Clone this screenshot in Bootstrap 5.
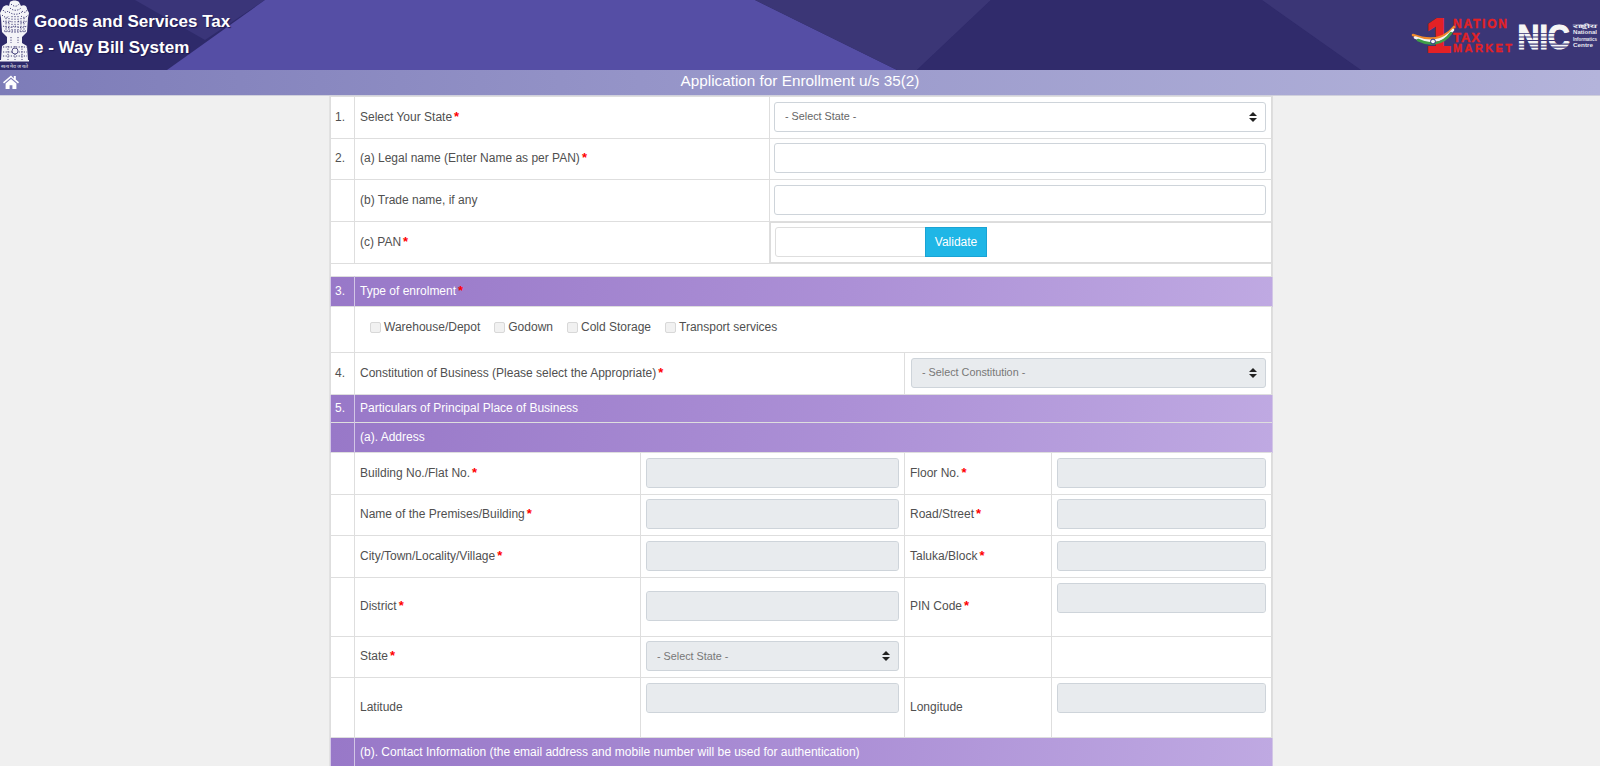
<!DOCTYPE html>
<html lang="en">
<head>
    <meta charset="UTF-8">
    <title>e-Way Bill System - Enrollment</title>
    <link href="https://cdn.jsdelivr.net/npm/bootstrap@5.3.3/dist/css/bootstrap.min.css" rel="stylesheet">
    <style>
        body {
            background: #f0f0f0;
            font-family: "Liberation Sans", Arial, sans-serif;
            font-size: 12px;
            color: #505050;
        }

        /* Top banner */
        .site-head {
            height: 70px;
            background: #2e2a6a;
        }
        .head-art {
            top: 0;
            left: 0;
            width: 100%;
            height: 70px;
        }
        .head-title {
            padding: 9px 0 0 4px;
            color: #fff;
            font-size: 17px;
            font-weight: 700;
            line-height: 26px;
            text-shadow: 1px 1px 1px #1c1850;
        }
        .title-bar {
            height: 26px;
            color: #fff;
            font-size: 15.3px;
            line-height: 22px;
            padding-bottom: 2px;
            background: linear-gradient(90deg, #7d7cb8 0%, #9594c8 40%, #b4b4db 100%);
            border-bottom: 1px solid #d0d0dc;
        }
        .home-link {
            left: 3px;
            top: 5px;
            line-height: 0;
        }

        /* Form sheet */
        .page-wrap {
            padding-left: 2px;
        }
        .form-sheet {
            width: 944px;
            background: #fff;
            border-left: 1px solid #e2e2e2;
            border-right: 2px solid #dcdcdc;
        }
        .enrol-table {
            table-layout: fixed;
            width: 942px;
            --bs-table-border-color: #dedede;
            --bs-table-bg: transparent;
            --bs-table-color: #505050;
            color: #505050;
        }
        .enrol-table td {
            padding: 0 5px 2px;
            vertical-align: middle;
        }
        .enrol-table td:first-child {
            padding-left: 4px;
        }
        .enrol-table td:last-child {
            padding-right: 6px;
        }
        .enrol-table td.wide-cell {
            padding-left: 4px;
        }
        .enrol-table td.narrow-cell {
            padding-left: 6px;
        }
        .enrol-table td.top-cell {
            padding-top: 5px;
            vertical-align: top;
        }
        .rh-13 { height: 13px; }
        .rh-28 { height: 28px; }
        .rh-30 { height: 30px; }
        .rh-41 { height: 41px; }
        .rh-42 { height: 42px; }
        .rh-46 { height: 46px; }
        .rh-59 { height: 59px; }
        .rh-60 { height: 60px; }

        .sec-row {
            background: linear-gradient(100deg, #9878c8 0%, #ac90d6 55%, #bfa9e2 100%);
        }
        .enrol-table .sec-row td {
            color: #fff;
            border-color: #d2c6e6;
        }
        .req {
            color: #f00;
            font-weight: 700;
            font-size: 13px;
            line-height: 0;
            margin-left: 2px;
        }

        /* Inputs */
        .enrol-table .form-control,
        .enrol-table .form-select {
            height: 30px;
            min-height: 30px;
            font-size: 10.8px;
            padding: 0 10px;
            border-color: #ced4da;
            border-radius: 3px;
            color: #666;
        }
        .enrol-table .form-select {
            background-image: url("data:image/svg+xml,%3Csvg xmlns='http://www.w3.org/2000/svg' viewBox='0 0 4 5'%3E%3Cpath fill='%23222' d='M2 0L0 2h4zm0 5L0 3h4z'/%3E%3C/svg%3E");
            background-size: 8px 10px;
            background-position: right 8px center;
        }
        .enrol-table .form-control:disabled,
        .enrol-table .form-select:disabled {
            background-color: #e8ebee;
            color: #777;
        }
        .enrol-table td.pan-cell {
            padding-left: 5px;
            box-shadow: inset 0 0 0 1px #dcdcdc;
        }
        .pan-group {
            width: 213px;
        }
        .enrol-table .pan-group .form-control {
            width: 151px;
            flex: none;
            border-color: #dedede;
            border-radius: 3px 0 0 3px;
        }
        .btn-validate {
            width: 62px;
            height: 30px;
            padding: 0;
            font-size: 12px;
            color: #fff;
            background: #1fb6e6;
            border: 1px solid #1aa3d4;
            border-radius: 0;
        }
        .check-line {
            padding-left: 10px;
            margin-top: -3px;
            column-gap: 14px;
        }
        .check-line label {
            column-gap: 3px;
        }
        .enrol-table .check-line .form-check-input {
            width: 11px;
            height: 11px;
            margin: 0;
            background-color: #f1f1f1;
            border-color: #d8d8d8;
            border-radius: 2px;
            opacity: 1;
        }
    </style>
</head>
<body class="vh-100 overflow-hidden">

<header class="site-head position-relative d-flex">
    <svg class="head-art position-absolute" viewBox="0 0 1600 70" preserveAspectRatio="none">
        <polygon fill="#3a3579" points="135,0 265,0 205,40"/>
        <polygon fill="#554ea5" points="265,0 755,0 897,70 167,70"/>
        <polygon fill="#3b3676" points="755,0 991,0 917,70 897,70"/>
        <polygon fill="#302b6b" points="991,0 1262,0 1361,70 917,70"/>
        <polygon fill="#3b3676" points="1262,0 1600,0 1600,70 1361,70"/>
    </svg>

    <!-- state emblem -->
    <svg class="position-relative flex-shrink-0" width="30" height="70" viewBox="0 0 30 70">
        <path fill="#f4f4f8" d="M10 2C12 0 17 0 19 2L21 6C24 4 27 6 27 9L29 13L28 18L27 32L22 37V43L27 46L28 60H1L2 46L7 43V37L2 32L1 18L0 13L3 7C5 5 8 5 9 6Z"/>
        <g fill="none" stroke="#2e2a6a" stroke-width=".9" stroke-dasharray="1.2 1.4">
            <path d="M11 4C14 7 17 7 19 4M10 8C13 11 18 11 21 8M9 12C13 15 18 15 22 12"/>
            <path d="M3 10C5 13 7 13 8 11M22 11C24 13 26 13 27 10M2 15C5 18 8 18 9 16M21 16C23 18 26 18 28 15"/>
            <path d="M3 21C6 23 9 23 11 21M18 21C21 23 24 23 27 21M3 26C7 28 11 28 14 26M15 26C19 28 23 28 27 26M4 31H26"/>
            <path d="M6 18V33M9 18V33M12 16V34M15 16V34M18 16V34M21 18V33M24 18V33M11 37V43M18 37V43"/>
            <path d="M3 47H27M3 52H27M3 56H27M8 46V60M15 46V60M22 46V60"/>
        </g>
        <circle cx="15" cy="51" r="3" fill="#f4f4f8" stroke="#2e2a6a" stroke-width=".8"/>
        <rect x="0" y="60" width="29" height="1.5" fill="#f4f4f8"/>
        <text x="1" y="67.5" font-size="5" fill="#e8e8f0" font-family="Liberation Sans, sans-serif" textLength="27" lengthAdjust="spacingAndGlyphs">सत्यमेव जयते</text>
    </svg>

    <div class="head-title position-relative">
        <div>Goods and Services Tax</div>
        <div>e - Way Bill System</div>
    </div>

    <!-- 1 Nation Tax Market and NIC logos -->
    <svg class="position-relative ms-auto flex-shrink-0" width="190" height="70" viewBox="0 0 190 70" font-family="Liberation Sans, Arial, sans-serif" font-weight="700">
        <g fill="#e32125" stroke="#e32125" stroke-width=".4">
            <text x="16" y="52" font-size="48" stroke-width="2" textLength="25" lengthAdjust="spacingAndGlyphs">1</text>
            <text x="43" y="28" font-size="12" textLength="54">NATION</text>
            <text x="43" y="41.5" font-size="13" textLength="27">TAX</text>
            <text x="43" y="52" font-size="11" textLength="59">MARKET</text>
        </g>
        <g fill="none" stroke-width="2.6" stroke-linecap="round">
            <path stroke="#f0892a" d="M3 35C16 40 32 42 44 27"/>
            <path stroke="#f4f4f4" d="M5 37.5C16 42 32 44 43 30"/>
            <path stroke="#3f9e48" d="M8 40C18 45 32 46 41 33"/>
        </g>
        <circle cx="23" cy="41.5" r="2.4" fill="#f4f4f4" stroke="#26307a" stroke-width="1"/>

        <text transform="translate(107.5 48.5) scale(.867 1)" font-size="35" fill="#f6f6f6" stroke="#f6f6f6" stroke-width="1.2">NIC</text>
        <g fill="#3b3676">
            <rect x="105" y="33" width="57" height=".8"/>
            <rect x="105" y="36.5" width="57" height="1"/>
            <rect x="105" y="40" width="57" height="1"/>
            <rect x="105" y="43.5" width="57" height="1.2"/>
            <rect x="105" y="46.5" width="57" height="1.2"/>
        </g>
        <g fill="#e8e8f0" font-size="5">
            <text x="163" y="27.5" textLength="24" lengthAdjust="spacingAndGlyphs">राष्ट्रीय</text>
            <text x="163" y="34" textLength="24" lengthAdjust="spacingAndGlyphs">National</text>
            <text x="163" y="40.5" textLength="24" lengthAdjust="spacingAndGlyphs">Informatics</text>
            <text x="163" y="47" textLength="20" lengthAdjust="spacingAndGlyphs">Centre</text>
        </g>
    </svg>
</header>

<div class="title-bar position-relative text-center">
    <a href="#" class="home-link position-absolute">
        <svg width="16" height="14" viewBox="0 0 16 14" fill="#fff">
            <path d="M8 .4 0 7.3l1 1.2L8 2.6l7 5.9 1-1.2-3.2-2.8V1h-2v2.6Z"/>
            <path d="M2.6 8.6V14h4v-3.8h2.8V14h4V8.6L8 4Z"/>
        </svg>
    </a>
    Application for Enrollment u/s 35(2)
</div>

<div class="page-wrap">
    <main class="form-sheet mx-auto">
        <table class="table table-bordered enrol-table mb-0">
            <colgroup>
                <col style="width:24px">
                <col style="width:286px">
                <col style="width:129px">
                <col style="width:135px">
                <col style="width:147px">
                <col style="width:221px">
            </colgroup>
            <tbody>
                <tr class="rh-42">
                    <td>1.</td>
                    <td colspan="2">Select Your State<span class="req">*</span></td>
                    <td colspan="3" class="wide-cell">
                        <select class="form-select"><option>- Select State -</option></select>
                    </td>
                </tr>
                <tr class="rh-41">
                    <td>2.</td>
                    <td colspan="2">(a) Legal name (Enter Name as per PAN)<span class="req">*</span></td>
                    <td colspan="3" class="wide-cell"><input type="text" class="form-control"></td>
                </tr>
                <tr class="rh-42">
                    <td></td>
                    <td colspan="2">(b) Trade name, if any</td>
                    <td colspan="3" class="wide-cell"><input type="text" class="form-control"></td>
                </tr>
                <tr class="rh-42">
                    <td></td>
                    <td colspan="2">(c) PAN<span class="req">*</span></td>
                    <td colspan="3" class="pan-cell">
                        <div class="input-group flex-nowrap pan-group">
                            <input type="text" class="form-control">
                            <button type="button" class="btn btn-validate">Validate</button>
                        </div>
                    </td>
                </tr>
                <tr class="rh-13"><td colspan="6"></td></tr>

                <tr class="rh-30 sec-row">
                    <td>3.</td>
                    <td colspan="5">Type of enrolment<span class="req">*</span></td>
                </tr>
                <tr class="rh-46">
                    <td></td>
                    <td colspan="5">
                        <div class="check-line d-flex">
                            <label class="d-flex align-items-center"><input type="checkbox" class="form-check-input" disabled>Warehouse/Depot</label>
                            <label class="d-flex align-items-center"><input type="checkbox" class="form-check-input" disabled>Godown</label>
                            <label class="d-flex align-items-center"><input type="checkbox" class="form-check-input" disabled>Cold Storage</label>
                            <label class="d-flex align-items-center"><input type="checkbox" class="form-check-input" disabled>Transport services</label>
                        </div>
                    </td>
                </tr>
                <tr class="rh-42">
                    <td>4.</td>
                    <td colspan="3">Constitution of Business (Please select the Appropriate)<span class="req">*</span></td>
                    <td colspan="2" class="narrow-cell">
                        <select class="form-select" disabled><option>- Select Constitution -</option></select>
                    </td>
                </tr>

                <tr class="rh-28 sec-row">
                    <td>5.</td>
                    <td colspan="5">Particulars of Principal Place of Business</td>
                </tr>
                <tr class="rh-30 sec-row">
                    <td></td>
                    <td colspan="5">(a). Address</td>
                </tr>
                <tr class="rh-42">
                    <td></td>
                    <td>Building No./Flat No.<span class="req">*</span></td>
                    <td colspan="2"><input type="text" class="form-control" disabled></td>
                    <td>Floor No.<span class="req">*</span></td>
                    <td><input type="text" class="form-control" disabled></td>
                </tr>
                <tr class="rh-41">
                    <td></td>
                    <td>Name of the Premises/Building<span class="req">*</span></td>
                    <td colspan="2"><input type="text" class="form-control" disabled></td>
                    <td>Road/Street<span class="req">*</span></td>
                    <td><input type="text" class="form-control" disabled></td>
                </tr>
                <tr class="rh-42">
                    <td></td>
                    <td>City/Town/Locality/Village<span class="req">*</span></td>
                    <td colspan="2"><input type="text" class="form-control" disabled></td>
                    <td>Taluka/Block<span class="req">*</span></td>
                    <td><input type="text" class="form-control" disabled></td>
                </tr>
                <tr class="rh-59">
                    <td></td>
                    <td>District<span class="req">*</span></td>
                    <td colspan="2"><input type="text" class="form-control" disabled></td>
                    <td>PIN Code<span class="req">*</span></td>
                    <td class="top-cell"><input type="text" class="form-control" disabled></td>
                </tr>
                <tr class="rh-41">
                    <td></td>
                    <td>State<span class="req">*</span></td>
                    <td colspan="2">
                        <select class="form-select" disabled><option>- Select State -</option></select>
                    </td>
                    <td></td>
                    <td></td>
                </tr>
                <tr class="rh-60">
                    <td></td>
                    <td>Latitude</td>
                    <td colspan="2" class="top-cell"><input type="text" class="form-control" disabled></td>
                    <td>Longitude</td>
                    <td class="top-cell"><input type="text" class="form-control" disabled></td>
                </tr>
                <tr class="rh-30 sec-row">
                    <td></td>
                    <td colspan="5">(b). Contact Information (the email address and mobile number will be used for authentication)</td>
                </tr>
            </tbody>
        </table>
    </main>
</div>

<script src="https://cdn.jsdelivr.net/npm/bootstrap@5.3.3/dist/js/bootstrap.bundle.min.js"></script>
</body>
</html>
